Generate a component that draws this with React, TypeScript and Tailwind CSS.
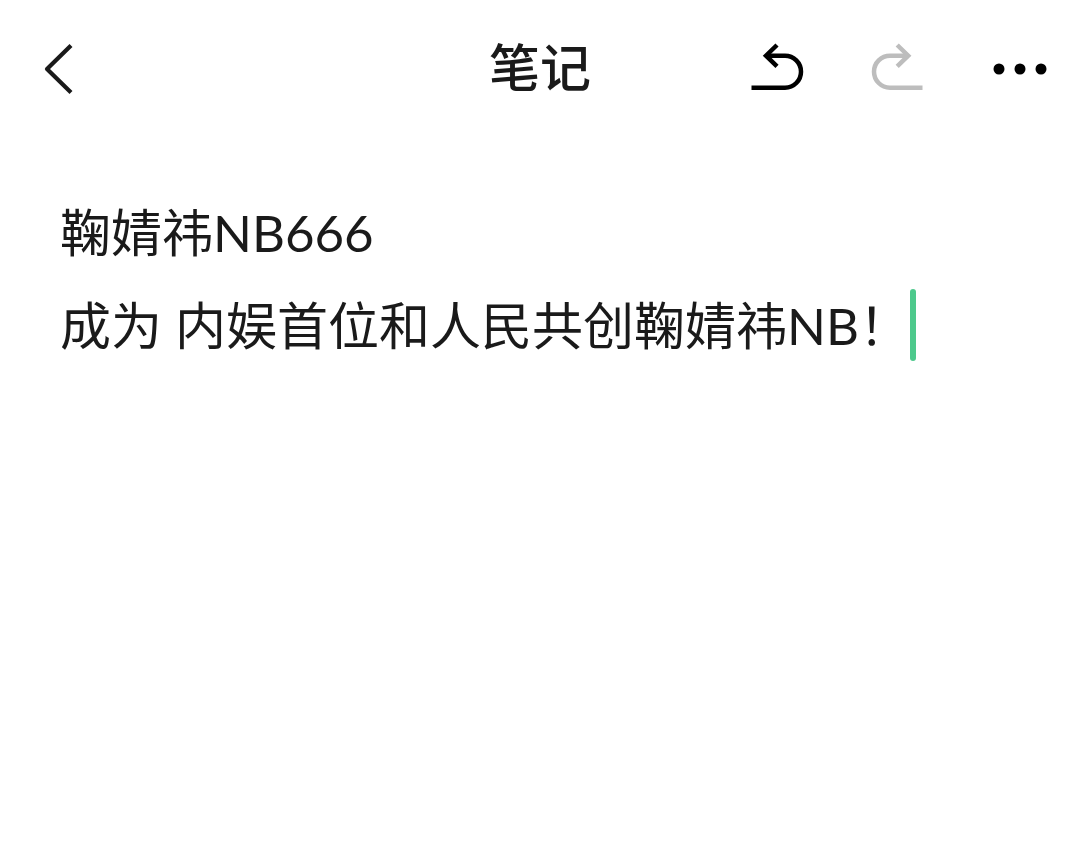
import { useState } from 'react';

const NOTE = '鞠婧祎NB666\n成为 内娱首位和人民共创鞠婧祎NB！';

function BackIcon() {
  return (
    <svg className="size-16" viewBox="0 0 64 64" fill="none" stroke="#1a1a1a" strokeWidth="4.2" aria-hidden="true">
      <path d="M39 8.5 15 32l24 23.5" strokeLinejoin="round" />
    </svg>
  );
}

function UndoIcon() {
  return (
    <svg className="size-16" viewBox="0 0 64 64" fill="none" stroke="currentColor" strokeWidth="4.5" aria-hidden="true">
      <path d="M7.5 50.7H41a16 16 0 0 0 0-32H22" />
      <path d="M33 8 22 18.7 33 29.4" />
    </svg>
  );
}

function RedoIcon() {
  return (
    <svg className="size-16" viewBox="0 0 64 64" fill="none" stroke="currentColor" strokeWidth="4.5" aria-hidden="true">
      <path d="M58.5 50.7H26a16 16 0 0 1 0-32h18" />
      <path d="M33.2 8l11 10.7-11 10.7" />
    </svg>
  );
}

function MoreIcon() {
  return (
    <svg className="size-16" viewBox="0 0 64 64" fill="currentColor" aria-hidden="true">
      <circle cx="15" cy="32" r="5.5" />
      <circle cx="36" cy="32" r="5.5" />
      <circle cx="57" cy="32" r="5.5" />
    </svg>
  );
}

export default function App() {
  const [text, setText] = useState(NOTE);
  const [touched, setTouched] = useState(false);

  return (
    <div className="flex min-h-screen flex-col bg-white font-['Lato','Noto_Sans_CJK_SC',sans-serif] text-[#1a1a1a]">
      {/* Top bar */}
      <header className="grid grid-cols-[1fr_auto_1fr] items-start px-8 pt-[37px] pb-9">
        <button type="button" aria-label="返回" className="justify-self-start">
          <BackIcon />
        </button>
        <h1 className="text-[51px] leading-14 font-medium font-['Noto_Sans_CJK_SC',sans-serif]">笔记</h1>
        <div className="flex gap-14 justify-self-end text-black">
          <button type="button" aria-label="撤销">
            <UndoIcon />
          </button>
          <button type="button" aria-label="重做" disabled className="text-[#bdbdbd]">
            <RedoIcon />
          </button>
          <button type="button" aria-label="更多">
            <MoreIcon />
          </button>
        </div>
      </header>

      {/* Note body */}
      <main className="relative flex flex-1 flex-col pt-[49px]">
        <textarea
          aria-label="笔记内容"
          value={text}
          spellCheck={false}
          onFocus={() => setTouched(true)}
          onChange={e => setText(e.target.value)}
          className="w-full flex-1 resize-none bg-transparent px-15 text-[51px] leading-[93px] caret-[#4dc98c] outline-none"
        />
        {/* Resting caret, replaced by the native one on focus */}
        {!touched && (
          <span className="pointer-events-none absolute top-[152px] left-[910px] h-18 w-1.5 rounded-full bg-[#4dc98c]" />
        )}
      </main>
    </div>
  );
}
